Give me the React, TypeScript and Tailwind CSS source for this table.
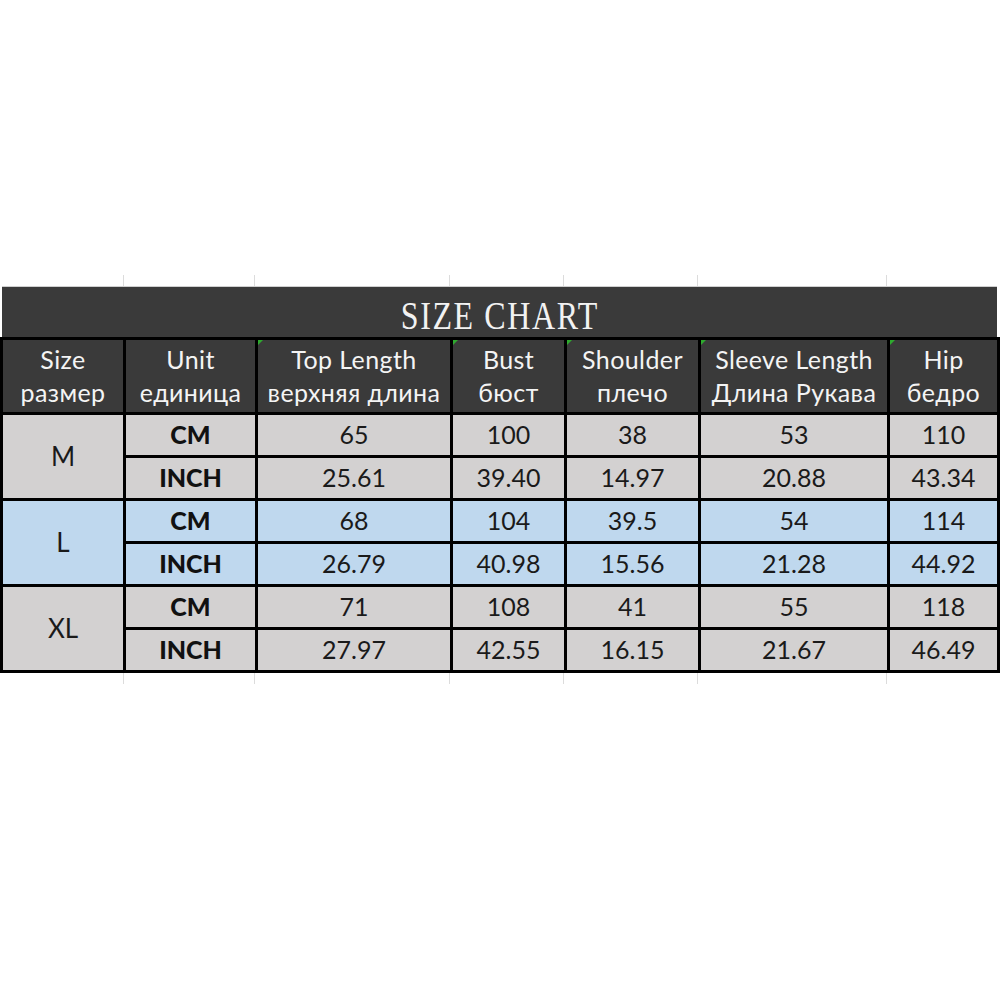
const cols = [
  { en: "Size", ru: "размер" },
  { en: "Unit", ru: "единица" },
  { en: "Top Length", ru: "верхняя длина" },
  { en: "Bust", ru: "бюст" },
  { en: "Shoulder", ru: "плечо" },
  { en: "Sleeve Length", ru: "Длина Рукава" },
  { en: "Hip", ru: "бедро" },
];

const sizes = [
  { size: "M", bg: "bg-[#d3d1d1]", cm: ["65", "100", "38", "53", "110"], inch: ["25.61", "39.40", "14.97", "20.88", "43.34"] },
  { size: "L", bg: "bg-[#bfd8ee]", cm: ["68", "104", "39.5", "54", "114"], inch: ["26.79", "40.98", "15.56", "21.28", "44.92"] },
  { size: "XL", bg: "bg-[#d3d1d1]", cm: ["71", "108", "41", "55", "118"], inch: ["27.97", "42.55", "16.15", "21.67", "46.49"] },
];

const gridCols = "grid grid-cols-[120px_129px_192px_111px_131px_186px_107px] gap-[3px]";
const font = { fontFamily: "Lato, 'Noto Sans', sans-serif" };

function FaintRow() {
  return (
    <div className="grid grid-cols-[124px_131px_195px_114px_134px_189px_113px] h-[11px]">
      {cols.map((c, i) => (
        <div key={i} className={i < 6 ? "border-r border-[#dcdcdc]" : ""} />
      ))}
    </div>
  );
}

export default function App() {
  return (
    <div className="w-[1000px] h-[1000px] bg-white" style={font}>
      <div className="h-[275px]" />
      <FaintRow />
      <div className="ml-[2px] mr-[3px] h-[51px] bg-[#3a3a3a] flex items-center justify-center border-t border-[#cfcfcf]">
        <span
          className="inline-block scale-x-[0.8] text-[40px] leading-none tracking-[2px] text-[#f2f2f2] mt-[8px]"
          style={{ fontFamily: "'Liberation Serif', serif" }}
        >
          SIZE CHART
        </span>
      </div>
      <div className={`${gridCols} bg-black p-[3px]`}>
        {cols.map((c, i) => (
          <div key={i} className="relative h-[72px] bg-[#3a3a3a] flex flex-col items-center justify-center text-[#f4f4f4] text-[25px] leading-[33px] tracking-[0.4px]">
            {i >= 2 && (
              <span className="absolute left-0 top-0 w-0 h-0 border-t-[5px] border-r-[5px] border-t-[#2eaa2e] border-r-transparent" />
            )}
            <div>{c.en}</div>
            <div>{c.ru}</div>
          </div>
        ))}
        {sizes.map((s) => (
          <div key={s.size} className="contents">
            <div className={`${s.bg} row-span-2 flex items-center justify-center text-[26px] text-[#1a1a1a]`}>{s.size}</div>
            <div className={`${s.bg} h-[40px] flex items-center justify-center text-[25px] font-black text-[#111]`}>CM</div>
            {s.cm.map((v, i) => (
              <div key={"c" + i} className={`${s.bg} h-[40px] flex items-center justify-center text-[25px] text-[#1a1a1a]`}>{v}</div>
            ))}
            <div className={`${s.bg} h-[40px] flex items-center justify-center text-[25px] font-black text-[#111]`}>INCH</div>
            {s.inch.map((v, i) => (
              <div key={"i" + i} className={`${s.bg} h-[40px] flex items-center justify-center text-[25px] text-[#1a1a1a]`}>{v}</div>
            ))}
          </div>
        ))}
      </div>
      <FaintRow />
    </div>
  );
}
